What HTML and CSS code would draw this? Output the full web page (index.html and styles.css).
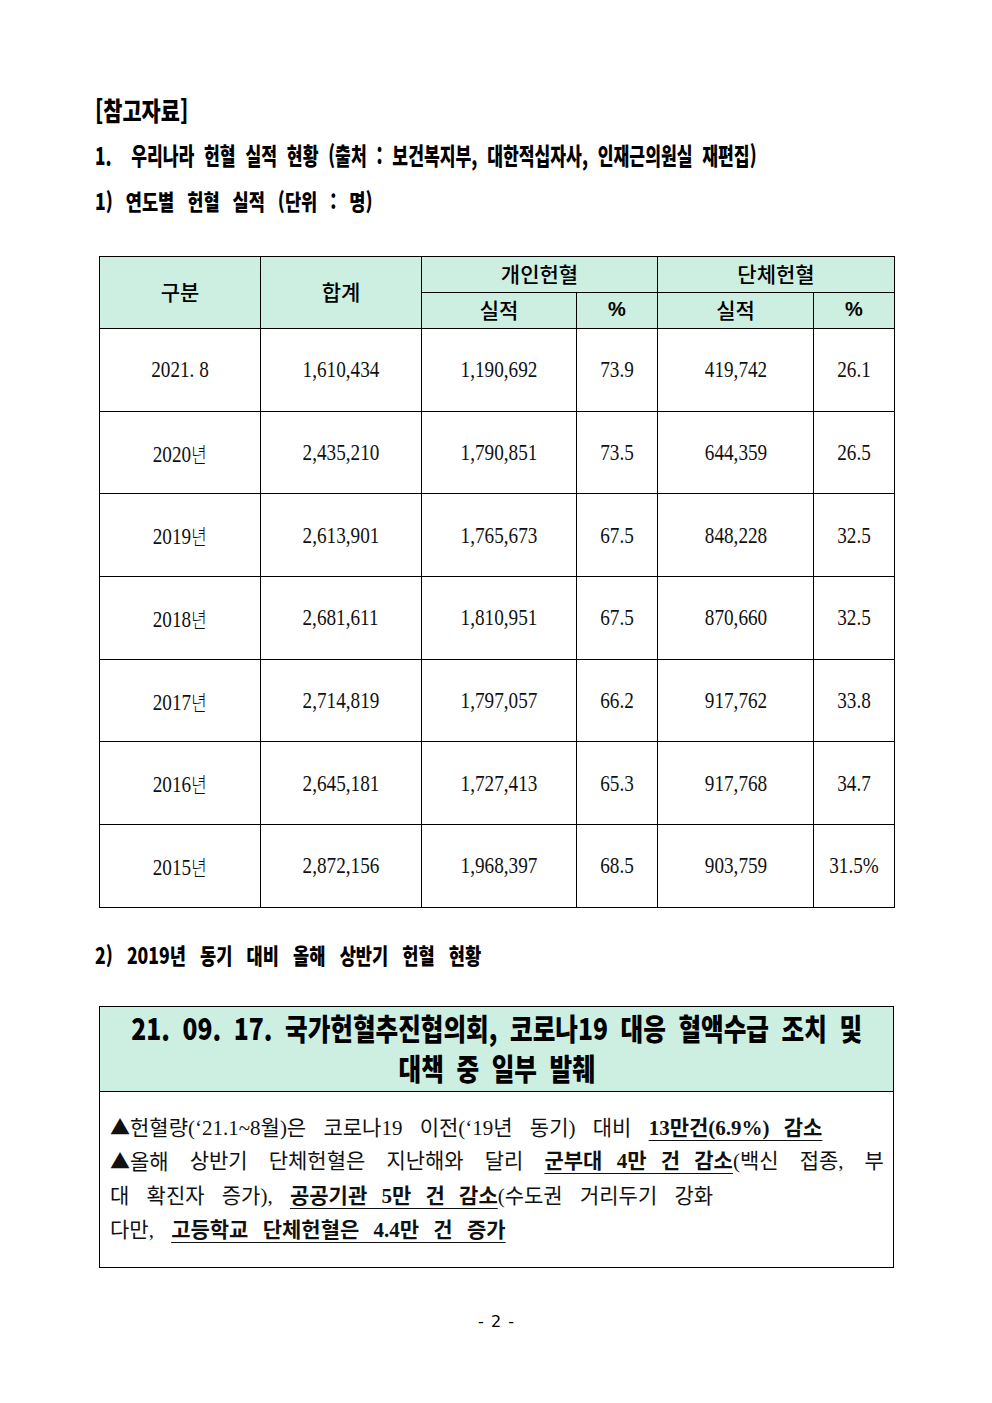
FILE: index.html
```html
<!DOCTYPE html>
<html lang="ko">
<head>
<meta charset="utf-8">
<title>참고자료</title>
<link rel="stylesheet" href="styles.css">
</head>
<body>
<div class="page">
  <h1 class="h0"><span class="sx s0">[참고자료]</span></h1>
  <h2 class="h1"><span class="sx s1">1.&nbsp; 우리나라 헌혈 실적 현황 (출처 : 보건복지부, 대한적십자사, 인재근의원실 재편집)</span></h2>
  <h3 class="h2"><span class="sx s2">1) 연도별 헌혈 실적 (단위 : 명)</span></h3>

  <table class="stats">
    <colgroup>
      <col class="c1"><col class="c2"><col class="c3"><col class="c4"><col class="c5"><col class="c6">
    </colgroup>
    <thead>
      <tr class="hr1">
        <th rowspan="2">구분</th>
        <th rowspan="2">합계</th>
        <th colspan="2">개인헌혈</th>
        <th colspan="2">단체헌혈</th>
      </tr>
      <tr class="hr2">
        <th>실적</th>
        <th class="pct">%</th>
        <th>실적</th>
        <th class="pct">%</th>
      </tr>
    </thead>
    <tbody>
      <tr><td><span class="n">2021. 8</span></td><td><span class="n">1,610,434</span></td><td><span class="n">1,190,692</span></td><td><span class="n">73.9</span></td><td><span class="n">419,742</span></td><td><span class="n">26.1</span></td></tr>
      <tr><td><span class="n">2020<span class="k">년</span></span></td><td><span class="n">2,435,210</span></td><td><span class="n">1,790,851</span></td><td><span class="n">73.5</span></td><td><span class="n">644,359</span></td><td><span class="n">26.5</span></td></tr>
      <tr><td><span class="n">2019<span class="k">년</span></span></td><td><span class="n">2,613,901</span></td><td><span class="n">1,765,673</span></td><td><span class="n">67.5</span></td><td><span class="n">848,228</span></td><td><span class="n">32.5</span></td></tr>
      <tr><td><span class="n">2018<span class="k">년</span></span></td><td><span class="n">2,681,611</span></td><td><span class="n">1,810,951</span></td><td><span class="n">67.5</span></td><td><span class="n">870,660</span></td><td><span class="n">32.5</span></td></tr>
      <tr><td><span class="n">2017<span class="k">년</span></span></td><td><span class="n">2,714,819</span></td><td><span class="n">1,797,057</span></td><td><span class="n">66.2</span></td><td><span class="n">917,762</span></td><td><span class="n">33.8</span></td></tr>
      <tr><td><span class="n">2016<span class="k">년</span></span></td><td><span class="n">2,645,181</span></td><td><span class="n">1,727,413</span></td><td><span class="n">65.3</span></td><td><span class="n">917,768</span></td><td><span class="n">34.7</span></td></tr>
      <tr><td><span class="n">2015<span class="k">년</span></span></td><td><span class="n">2,872,156</span></td><td><span class="n">1,968,397</span></td><td><span class="n">68.5</span></td><td><span class="n">903,759</span></td><td><span class="n">31.5%</span></td></tr>
    </tbody>
  </table>

  <h3 class="h3"><span class="sx s2">2) 2019년 동기 대비 올해 상반기 헌혈 현황</span></h3>

  <div class="box">
    <div class="box-title">
      <div class="bt-line"><span class="sx s3">21. 09. 17. 국가헌혈추진협의회, 코로나19 대응 혈액수급 조치 및</span></div>
      <div class="bt-line"><span class="sx s3">대책 중 일부 발췌</span></div>
    </div>
    <div class="box-body">
      <p class="bl"><span class="tri">▲</span>헌혈량(‘21.1~8월)은 코로나19 이전(‘19년 동기) 대비 <u class="em">13만건(6.9%) 감소</u></p>
      <p class="bl spread"><span><span class="tri">▲</span>올해</span><span>상반기</span><span>단체헌혈은</span><span>지난해와</span><span>달리</span><span><u class="em">군부대 4만 건 감소</u>(백신</span><span>접종,</span><span>부</span></p>
      <p class="bl">대 확진자 증가), <u class="em">공공기관 5만 건 감소</u>(수도권 거리두기 강화</p>
      <p class="bl">다만, <u class="em">고등학교 단체헌혈은 4.4만 건 증가</u></p>
    </div>
  </div>

  <div class="pageno">- 2 -</div>
</div>
</body>
</html>
```

FILE: styles.css
```css
html, body {
  margin: 0;
  padding: 0;
  background: #ffffff;
  color: #000000;
}

.page {
  width: 992px;
  padding-top: 92px;
  font-family: "Noto Sans CJK KR", "Noto Sans", sans-serif;
}

h1, h2, h3, p {
  margin: 0;
  font-weight: 700;
}

.h0, .h1, .h2, .h3 {
  margin-left: 95px;
  height: 30px;
  line-height: 30px;
  white-space: nowrap;
  font-weight: 900;
}

.sx {
  display: inline-block;
  transform-origin: left center;
  white-space: nowrap;
}

.s0 {
  font-size: 26px;
  transform: scaleX(0.8);
}

.h1 { margin-top: 18px; }
.s1 {
  font-size: 24px;
  transform: scaleX(0.715);
  word-spacing: 7px;
}

.h2 { margin-top: 15px; }
.s2 {
  font-size: 22px;
  transform: scaleX(0.8);
  word-spacing: 10px;
}

.h3 .s2 {
  word-spacing: 11.5px;
}

/* table */
.stats {
  margin: 41px 0 0 99px;
  border-collapse: collapse;
  table-layout: fixed;
  width: 795px;
}

.c1 { width: 161px; }
.c2 { width: 161px; }
.c3 { width: 155px; }
.c4 { width: 81px; }
.c5 { width: 156px; }
.c6 { width: 81px; }

.stats th, .stats td {
  border: 1px solid #000000;
  padding: 0;
  text-align: center;
  vertical-align: middle;
}

.stats th {
  background: #ccefe1;
  font-weight: 500;
  font-size: 21px;
  height: 32px;
  padding-bottom: 3px;
  color: #000000;
}

.stats th.pct {
  font-family: "Liberation Sans", sans-serif;
  font-weight: 700;
  font-size: 20px;
}

.stats td {
  height: 81.7px;
  font-family: "Liberation Serif", "Noto Sans CJK KR", serif;
  font-size: 24px;
  color: #111111;
}

.n {
  display: inline-block;
  transform: scaleX(0.8);
  white-space: nowrap;
}

.k {
  font-family: "Noto Sans CJK KR", sans-serif;
  font-size: 21px;
  font-weight: 300;
}

.h3 { margin-top: 31px; }

/* box */
.box {
  margin: 37px 0 0 99px;
  width: 793px;
  border: 1px solid #000000;
}

.box-title {
  background: #ccefe1;
  border-bottom: 1px solid #000000;
  padding: 0 0 4px;
  font-weight: 900;
}

.bt-line {
  display: flex;
  justify-content: center;
  height: 40px;
  line-height: 40px;
  white-space: nowrap;
}

.s3 {
  flex: none;
  font-size: 30px;
  transform-origin: center center;
  transform: scaleX(0.82);
  word-spacing: 7px;
}

.box-body {
  padding: 18px 9px 19px 10px;
}

.bl {
  font-family: "Liberation Serif", "Noto Sans CJK KR", serif;
  font-weight: 400;
  font-size: 21px;
  height: 34.5px;
  line-height: 34.5px;
  word-spacing: 12px;
  white-space: nowrap;
  color: #111111;
}

.bl.spread {
  display: flex;
  justify-content: space-between;
}

.tri {
  font-family: "Noto Sans CJK KR", sans-serif;
  font-size: 20px;
}

.em {
  font-weight: 700;
  word-spacing: 9px;
  text-decoration: underline;
  text-decoration-thickness: 1px;
  text-underline-offset: 5px;
}

.pageno {
  margin-top: 44px;
  text-align: center;
  font-family: "DejaVu Sans", sans-serif;
  font-size: 16px;
  line-height: 20px;
  word-spacing: 2px;
}
```
